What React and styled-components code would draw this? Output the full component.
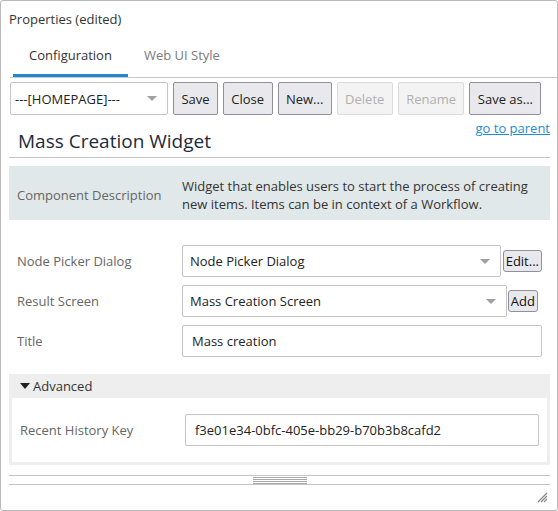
import React from "react";
import styled, { createGlobalStyle } from "styled-components";

const Global = createGlobalStyle`
  html, body { margin: 0; padding: 0; background: #fff; }
  body { font-family: "Open Sans", "Noto Sans", sans-serif; font-size: 13px; color: #333; }
  * { box-sizing: border-box; }
`;

const Window = styled.div`
  width: 558px;
  height: 511px;
  border: 1px solid #b9b9b9;
  border-radius: 3px;
  display: flex;
  flex-direction: column;
  overflow: hidden;
  & > * { flex-shrink: 0; }
`;

const TitleBar = styled.div`
  height: 37px;
  padding: 9px 8px 0;
  font-size: 13px;
  color: #333;
`;

const Tabs = styled.div`
  display: flex;
  margin-left: 9px;
  padding-left: 3px;
  height: 40px;
  border-bottom: 1px solid #c8c8c8;
`;

const Tab = styled.div`
  padding: 0 16px;
  display: flex;
  align-items: center;
  padding-bottom: 2px;
  font-size: 13px;
  color: ${p => (p.$active ? "#333" : "#7a7a7a")};
  border-bottom: 3px solid ${p => (p.$active ? "#1e88d0" : "transparent")};
`;

const Toolbar = styled.div`
  display: flex;
  gap: 5px;
  padding: 4px 0 0 9px;
  height: 37px;
`;

const SelectBox = styled.div`
  display: flex;
  align-items: center;
  justify-content: space-between;
  width: ${p => p.$width || "auto"};
  flex: ${p => (p.$grow ? 1 : "none")};
  height: ${p => p.$height || 32}px;
  padding: 0 10px 0 ${p => p.$pad || 7}px;
  border: 1px solid #c4c4c4;
  border-radius: 2px;
  background: #fff;
  color: #222;
  font-size: 13px;
`;

const Caret = styled.span`
  width: 0;
  height: 0;
  border-left: 5px solid transparent;
  border-right: 5px solid transparent;
  border-top: 5px solid #a0a0a0;
`;

const Button = styled.button`
  height: 33px;
  padding: 0 7.4px;
  font-family: inherit;
  font-size: 13px;
  color: ${p => (p.disabled ? "#b0b0b0" : "#222")};
  background: ${p => (p.disabled ? "#f3f3f3" : "#e9e9ed")};
  border: 1px solid ${p => (p.disabled ? "#dcdcdc" : "#8f8f9d")};
  border-radius: 2px;
`;

const SmallButton = styled.button`
  height: 22px;
  padding: 0 2px;
  font-family: inherit;
  font-size: 13px;
  color: #111;
  background: #e9e9ed;
  border: 1px solid #8f8f9d;
  border-radius: 3px;
  margin-left: ${p => p.$gap || 2}px;
  margin-right: ${p => p.$end || 0}px;
`;

const Content = styled.div`
  padding: 0 7px 0 8px;
  display: flex;
  flex-direction: column;
  & > * { flex-shrink: 0; }
`;

const HeadingBlock = styled.div`
  display: grid;
  grid-template-columns: 1fr auto;
  height: 39px;
  margin-top: 4px;
  padding-bottom: 3px;
  border-bottom: 1px solid #c4c4c4;
`;

const Heading = styled.h1`
  align-self: end;
  margin: 0;
  padding-left: 9px;
  font-size: 19px;
  font-weight: 400;
  line-height: 26px;
  color: #1e2b3a;
`;

const ParentLink = styled.a`
  align-self: start;
  font-size: 13px;
  line-height: 18px;
  color: #1e8bd3;
  text-decoration: underline;
`;

const Description = styled.div`
  display: grid;
  grid-template-columns: 173px 1fr;
  align-items: center;
  margin-top: 8px;
  padding: 10px 8px 7px 0;
  background: #e1e8ea;
  height: 54px;
`;

const Label = styled.div`
  padding-left: 8px;
  color: #666;
  font-size: 13px;
`;

const DescText = styled.div`
  line-height: 18px;
  color: #333;
`;

const Form = styled.div`
  display: flex;
  flex-direction: column;
  gap: 8px;
  margin-top: 25px;
  padding-right: 8px;
`;

const Row = styled.div`
  display: grid;
  grid-template-columns: 173px 1fr;
  align-items: center;
`;

const Field = styled.div`
  display: flex;
  align-items: center;
`;

const Input = styled.div`
  flex: 1;
  height: 32px;
  display: flex;
  align-items: center;
  padding-left: ${p => p.$pad || 9}px;
  border: 1px solid #c4c4c4;
  border-radius: 2px;
  color: #222;
  background: #fff;
`;

const Advanced = styled.div`
  margin-top: 17px;
  background: #eeeeee;
  padding: 0 3px 3px;
`;

const AdvancedHeader = styled.div`
  height: 24px;
  display: flex;
  align-items: center;
  gap: 3px;
  padding-left: 8px;
  color: #333;
`;

const Triangle = styled.span`
  width: 0;
  height: 0;
  border-left: 5px solid transparent;
  border-right: 5px solid transparent;
  border-top: 6px solid #222;
`;

const AdvancedBody = styled.div`
  background: #fff;
  padding: 16px 8px 16px 0;
`;

const Splitter = styled.div`
  margin: 10px 7px 0 8px;
  height: 10px;
  border-top: 1px solid #c4c4c4;
  border-bottom: 1px solid #c4c4c4;
  display: flex;
  justify-content: center;
  align-items: center;
`;

const Grip = styled.div`
  width: 54px;
  display: flex;
  flex-direction: column;
  gap: 1px;
  & > span { height: 1px; background: #a8a8a8; }
`;

const Footer = styled.div`
  flex: 1;
  display: flex;
  justify-content: flex-end;
  align-items: flex-end;
  padding: 0 9px 7px 0;
`;

export default function App() {
  return (
    <>
      <Global />
      <Window>
        <TitleBar>Properties (edited)</TitleBar>
        <Tabs>
          <Tab $active>Configuration</Tab>
          <Tab>Web UI Style</Tab>
        </Tabs>
        <Toolbar>
          <SelectBox $width="158px" $pad={4} $height={33}>
            <span>---[HOMEPAGE]---</span>
            <Caret />
          </SelectBox>
          <Button>Save</Button>
          <Button>Close</Button>
          <Button>New...</Button>
          <Button disabled>Delete</Button>
          <Button disabled>Rename</Button>
          <Button>Save as...</Button>
        </Toolbar>
        <Content>
          <HeadingBlock>
            <Heading>Mass Creation Widget</Heading>
            <ParentLink href="#">go to parent</ParentLink>
          </HeadingBlock>
          <Description>
            <Label>Component Description</Label>
            <DescText>
              Widget that enables users to start the process of creating new items. Items can be in context of a Workflow.
            </DescText>
          </Description>
          <Form>
            <Row>
              <Label>Node Picker Dialog</Label>
              <Field>
                <SelectBox $grow>
                  <span>Node Picker Dialog</span>
                  <Caret />
                </SelectBox>
                <SmallButton>Edit...</SmallButton>
              </Field>
            </Row>
            <Row>
              <Label>Result Screen</Label>
              <Field>
                <SelectBox $grow>
                  <span>Mass Creation Screen</span>
                  <Caret />
                </SelectBox>
                <SmallButton $gap={1} $end={4}>Add</SmallButton>
              </Field>
            </Row>
            <Row>
              <Label>Title</Label>
              <Field>
                <Input>Mass creation</Input>
              </Field>
            </Row>
          </Form>
          <Advanced>
            <AdvancedHeader>
              <Triangle />
              <span>Advanced</span>
            </AdvancedHeader>
            <AdvancedBody>
              <Row>
                <Label>Recent History Key</Label>
                <Field>
                  <Input>f3e01e34-0bfc-405e-bb29-b70b3b8cafd2</Input>
                </Field>
              </Row>
            </AdvancedBody>
          </Advanced>
        </Content>
        <Splitter>
          <Grip>
            <span />
            <span />
            <span />
            <span />
          </Grip>
        </Splitter>
        <Footer>
          <svg width="11" height="11" viewBox="0 0 11 11">
            <path d="M10 1 L1 10 M10 4 L4 10 M10 7 L7 10" stroke="#888" strokeWidth="1.2" />
          </svg>
        </Footer>
      </Window>
    </>
  );
}
